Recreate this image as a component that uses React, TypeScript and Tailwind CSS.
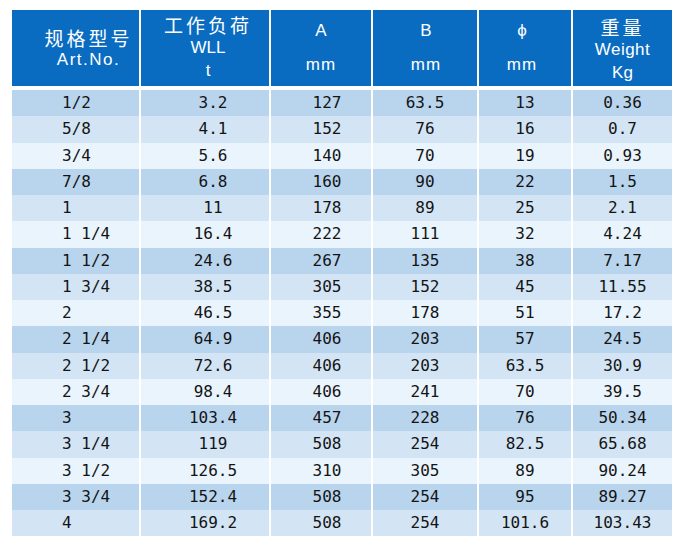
const widths = ["w-[127px]", "w-[128px]", "w-[100px]", "w-[104px]", "w-[92px]", "w-[99px]"]

const rows: string[][] = [
  ["1/2", "3.2", "127", "63.5", "13", "0.36"],
  ["5/8", "4.1", "152", "76", "16", "0.7"],
  ["3/4", "5.6", "140", "70", "19", "0.93"],
  ["7/8", "6.8", "160", "90", "22", "1.5"],
  ["1", "11", "178", "89", "25", "2.1"],
  ["1 1/4", "16.4", "222", "111", "32", "4.24"],
  ["1 1/2", "24.6", "267", "135", "38", "7.17"],
  ["1 3/4", "38.5", "305", "152", "45", "11.55"],
  ["2", "46.5", "355", "178", "51", "17.2"],
  ["2 1/4", "64.9", "406", "203", "57", "24.5"],
  ["2 1/2", "72.6", "406", "203", "63.5", "30.9"],
  ["2 3/4", "98.4", "406", "241", "70", "39.5"],
  ["3", "103.4", "457", "228", "76", "50.34"],
  ["3 1/4", "119", "508", "254", "82.5", "65.68"],
  ["3 1/2", "126.5", "310", "305", "89", "90.24"],
  ["3 3/4", "152.4", "508", "254", "95", "89.27"],
  ["4", "169.2", "508", "254", "101.6", "103.43"],
]

const shades = ["bg-[#b9d5ee]", "bg-[#d3e5f5]", "bg-[#e9f4fd]"]

// per-column alignment tweaks for body cells
const bodyAlign = [
  "justify-start pl-[50px]",
  "justify-center pl-4",
  "justify-center pl-3",
  "justify-center",
  "justify-center",
  "justify-center",
]

const cjk = "font-['Noto_Sans_CJK_SC',sans-serif]"
const latin = "font-['Liberation_Sans',Arial,sans-serif]"

function HeadCell({ w, className, children }: { w: string; className?: string; children: React.ReactNode }) {
  return (
    <div className={`${w} flex h-full flex-col items-center bg-[#0a6cc0] text-white ${className ?? ""}`}>
      {children}
    </div>
  )
}

function UnitCell({ w, label, className }: { w: string; label: string; className?: string }) {
  return (
    <HeadCell w={w} className={`pt-[11px] ${className ?? ""}`}>
      <span className={`${latin} text-[17px] leading-[20px]`}>{label}</span>
      <span className={`${latin} mt-[14px] text-[17px] leading-[20px] tracking-[1px]`}>mm</span>
    </HeadCell>
  )
}

export default function App() {
  return (
    <div className="h-[557px] w-[684px] bg-white pl-[12px] pt-[10px]">
      <div className="flex h-[76px] gap-[2px]">
        <HeadCell w={widths[0]} className="justify-center pl-[26px]">
          <span className={`${cjk} text-[19px] leading-[24px] tracking-[3px]`}>规格型号</span>
          <span className={`${latin} text-[17px] leading-[20px] tracking-[1.5px]`}>Art.No.</span>
        </HeadCell>
        <HeadCell w={widths[1]} className="pt-[3px] pl-[6px]">
          <span className={`${cjk} text-[19px] leading-[24px] tracking-[3px]`}>工作负荷</span>
          <span className={`${latin} mt-[1px] text-[17px] leading-[20px]`}>WLL</span>
          <span className={`${latin} mt-[3px] text-[17px] leading-[20px]`}>t</span>
        </HeadCell>
        <UnitCell w={widths[2]} label="A" />
        <UnitCell w={widths[3]} label="B" className="pl-[2px]" />
        <UnitCell w={widths[4]} label="ϕ" className="pr-[6px]" />
        <HeadCell w={widths[5]} className="pt-[6px]">
          <span className={`${cjk} text-[19px] leading-[22px] tracking-[3px]`}>重量</span>
          <span className={`${latin} mt-[1px] text-[17px] leading-[22px] tracking-[0.5px]`}>Weight</span>
          <span className={`${latin} mt-[1px] text-[17px] leading-[22px]`}>Kg</span>
        </HeadCell>
      </div>

      <div className="mt-[4px] flex flex-col">
        {rows.map((row, i) => (
          <div key={i} className="flex h-[26.25px] gap-[2px]">
            {row.map((cell, j) => (
              <div
                key={j}
                className={`${widths[j]} ${shades[i % 3]} ${bodyAlign[j]} flex items-center whitespace-pre font-['DejaVu_Sans_Mono',monospace] text-[16px] text-[#141414]`}
              >
                {cell}
              </div>
            ))}
          </div>
        ))}
      </div>
    </div>
  )
}
